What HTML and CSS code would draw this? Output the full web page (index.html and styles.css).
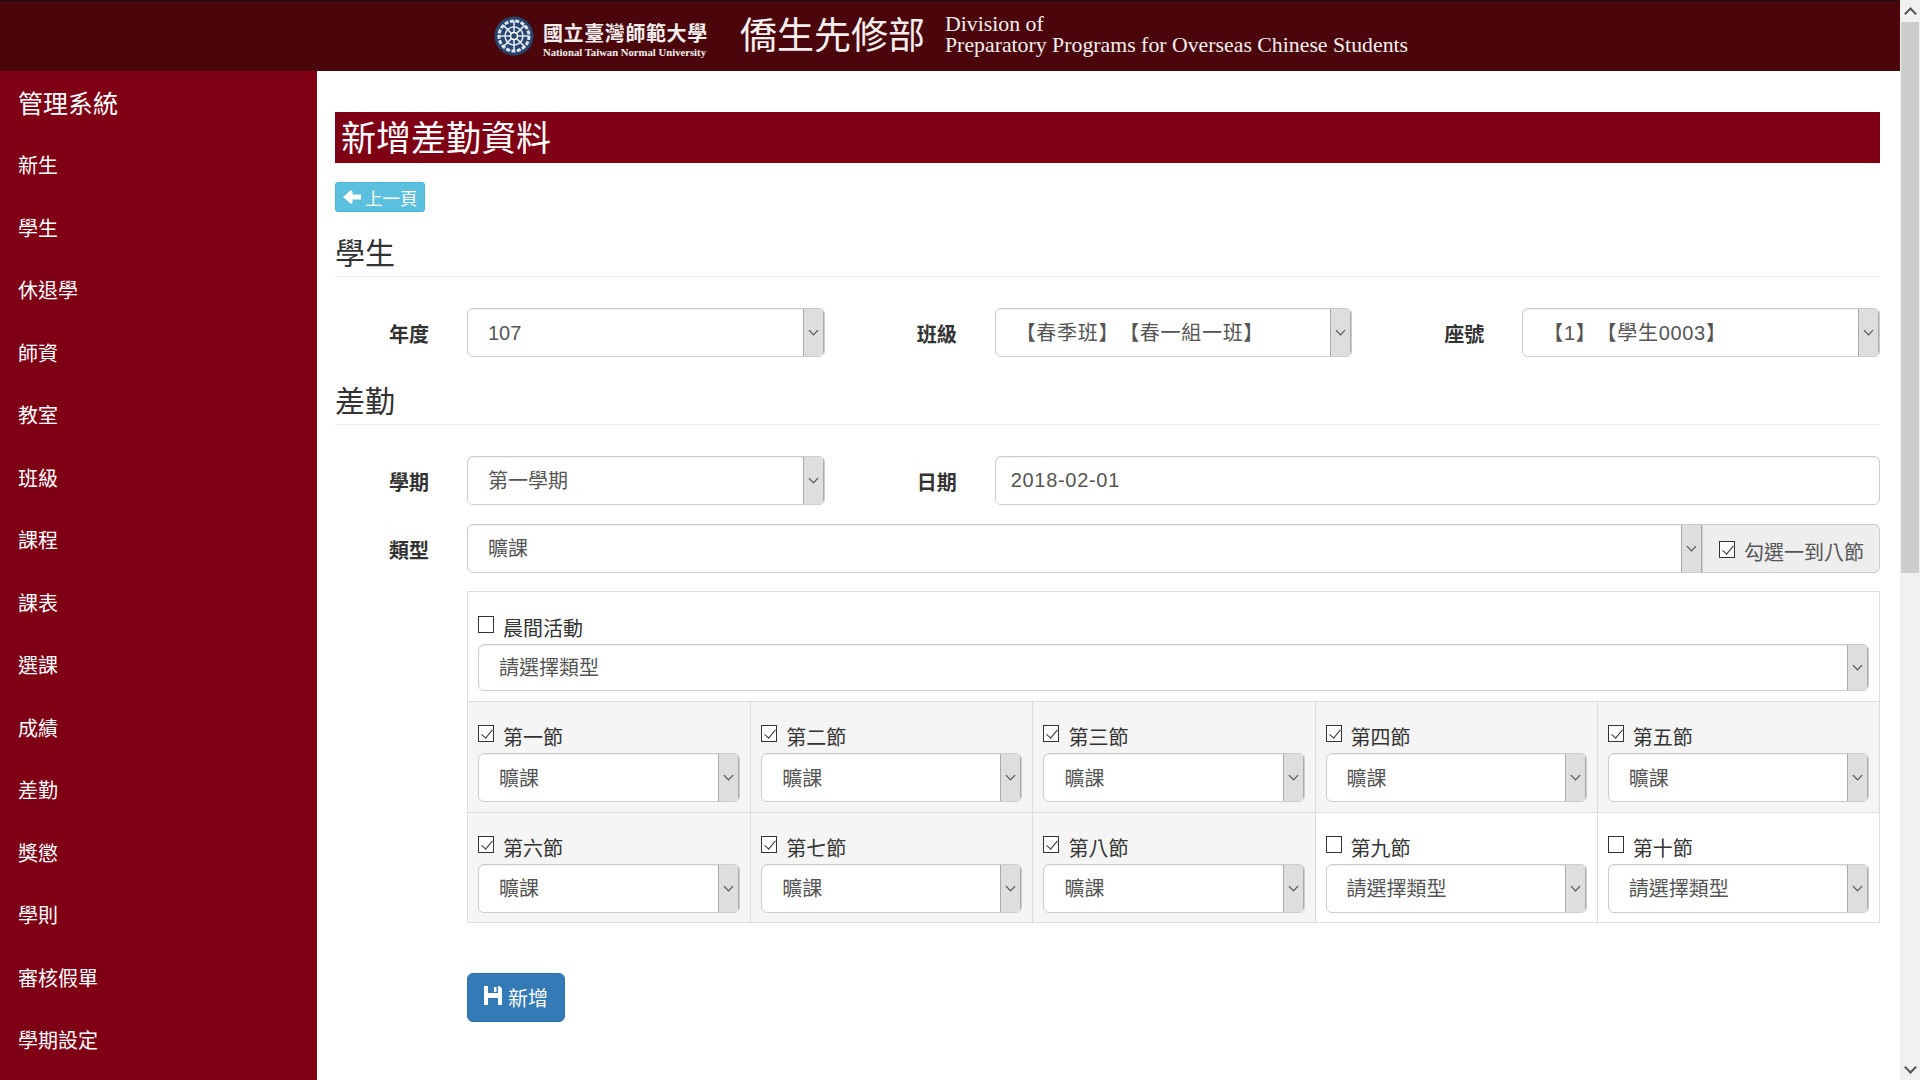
FILE: index.html
```html
<!DOCTYPE html>
<html lang="zh-Hant">
<head>
<meta charset="UTF-8">
<meta name="viewport" content="width=device-width,initial-scale=1.0">
<title>新增差勤資料</title>
<link rel="stylesheet" href="styles.css">
</head>
<body>
<div class="page">
    <div class="frame">
        <!-- 頁首 -->
        <header class="topbar">
            <svg class="logo" width="40" height="40" viewBox="0 0 40 40">
                <circle cx="20" cy="20" r="19.5" fill="#27456f"/>
                <circle cx="20" cy="20" r="15" fill="none" stroke="#dfe6ee" stroke-width="3" stroke-dasharray="4 1.5"/>
                <circle cx="20" cy="20" r="9" fill="none" stroke="#dfe6ee" stroke-width="1.5"/>
                <path d="M20 5V35M5 20H35M9.4 9.4L30.6 30.6M30.6 9.4L9.4 30.6" stroke="#dfe6ee" stroke-width="1.6"/>
                <circle cx="20" cy="20" r="3.5" fill="#27456f" stroke="#fff" stroke-width="1.5"/>
            </svg>
            <div class="school">
                <div class="school-zh">國立臺灣師範大學</div>
                <div class="school-en">National Taiwan Normal University</div>
            </div>
            <div class="dept-zh">僑生先修部</div>
            <div class="dept-en">Division of<br>Preparatory Programs for Overseas Chinese Students</div>
        </header>

        <div class="body-row">
            <!-- 左側選單 -->
            <nav class="sidebar">
                <div class="side-title">管理系統</div>
                <a href="#">新生</a>
                <a href="#">學生</a>
                <a href="#">休退學</a>
                <a href="#">師資</a>
                <a href="#">教室</a>
                <a href="#">班級</a>
                <a href="#">課程</a>
                <a href="#">課表</a>
                <a href="#">選課</a>
                <a href="#">成績</a>
                <a href="#">差勤</a>
                <a href="#">獎懲</a>
                <a href="#">學則</a>
                <a href="#">審核假單</a>
                <a href="#">學期設定</a>
            </nav>

            <main class="content">
                <h1 class="page-title">新增差勤資料</h1>
                <a class="btn-back" href="#">
                    <svg width="18" height="16" viewBox="0 0 18 16"><path d="M0 8L8 1L9.5 2.5V5.5H18V10.5H9.5V13.5L8 15Z" fill="#fff"/></svg>上一頁
                </a>

                <h3 class="section-head">學生</h3>
                <div class="row-3">
                    <div class="field">
                        <label>年度</label>
                        <div class="sel"><select><option>107</option></select><span class="arrow"></span></div>
                    </div>
                    <div class="field">
                        <label>班級</label>
                        <div class="sel wide-text"><select><option>【春季班】【春一組一班】</option></select><span class="arrow"></span></div>
                    </div>
                    <div class="field">
                        <label>座號</label>
                        <div class="sel wide-text"><select><option>【1】【學生0003】</option></select><span class="arrow"></span></div>
                    </div>
                </div>

                <h3 class="section-head second">差勤</h3>
                <div class="row-3">
                    <div class="field">
                        <label>學期</label>
                        <div class="sel"><select><option>第一學期</option></select><span class="arrow"></span></div>
                    </div>
                    <div class="field span-2">
                        <label>日期</label>
                        <input class="text-input" type="text" value="2018-02-01">
                    </div>
                </div>

                <div class="field type-row">
                    <label>類型</label>
                    <div class="type-group">
                        <div class="sel"><select><option>曠課</option></select><span class="arrow"></span></div>
                        <label class="addon"><input type="checkbox" checked>勾選一到八節</label>
                    </div>
                </div>

                <!-- 各節次 -->
                <div class="period-panel">
                    <div class="cell cell-wide">
                        <label class="check"><input type="checkbox">晨間活動</label>
                        <div class="sel low"><select><option>請選擇類型</option></select><span class="arrow"></span></div>
                    </div>
                    <div class="cell on">
                        <label class="check"><input type="checkbox" checked>第一節</label>
                        <div class="sel"><select><option>曠課</option></select><span class="arrow"></span></div>
                    </div>
                    <div class="cell on">
                        <label class="check"><input type="checkbox" checked>第二節</label>
                        <div class="sel"><select><option>曠課</option></select><span class="arrow"></span></div>
                    </div>
                    <div class="cell on">
                        <label class="check"><input type="checkbox" checked>第三節</label>
                        <div class="sel"><select><option>曠課</option></select><span class="arrow"></span></div>
                    </div>
                    <div class="cell on">
                        <label class="check"><input type="checkbox" checked>第四節</label>
                        <div class="sel"><select><option>曠課</option></select><span class="arrow"></span></div>
                    </div>
                    <div class="cell on">
                        <label class="check"><input type="checkbox" checked>第五節</label>
                        <div class="sel"><select><option>曠課</option></select><span class="arrow"></span></div>
                    </div>
                    <div class="cell on">
                        <label class="check"><input type="checkbox" checked>第六節</label>
                        <div class="sel"><select><option>曠課</option></select><span class="arrow"></span></div>
                    </div>
                    <div class="cell on">
                        <label class="check"><input type="checkbox" checked>第七節</label>
                        <div class="sel"><select><option>曠課</option></select><span class="arrow"></span></div>
                    </div>
                    <div class="cell on">
                        <label class="check"><input type="checkbox" checked>第八節</label>
                        <div class="sel"><select><option>曠課</option></select><span class="arrow"></span></div>
                    </div>
                    <div class="cell">
                        <label class="check"><input type="checkbox">第九節</label>
                        <div class="sel"><select><option>請選擇類型</option></select><span class="arrow"></span></div>
                    </div>
                    <div class="cell">
                        <label class="check"><input type="checkbox">第十節</label>
                        <div class="sel"><select><option>請選擇類型</option></select><span class="arrow"></span></div>
                    </div>
                </div>

                <button class="btn-save" type="button">
                    <svg width="20" height="19" viewBox="0 0 20 19"><path fill-rule="evenodd" d="M1 0H16.5L19 2.5V19H1ZM5 0V7H15V0ZM11 1H13.5V6H11ZM5 12V19H15V12Z" fill="#fff"/></svg>新增
                </button>
            </main>
        </div>
    </div>

    <!-- 捲軸 -->
    <div class="scrollbar">
        <span class="scroll-btn up"></span>
        <span class="scroll-thumb"></span>
        <span class="scroll-space"></span>
        <span class="scroll-btn down"></span>
    </div>
</div>
</body>
</html>
```

FILE: styles.css
```css
*{
    margin:0;
    padding:0;
    box-sizing:border-box;
}
html,body{
    height:100%;
    overflow:hidden;
}
body{
    font-family:"Liberation Sans","Noto Sans CJK TC",sans-serif;
    font-size:20px;
    color:#333;
    background:#fff;
    text-spacing-trim:space-all;
}
.page{
    display:flex;
    height:1080px;
}
.frame{
    flex:1;
    min-width:0;
    display:flex;
    flex-direction:column;
}

/* 頁首 */
.topbar{
    height:71px;
    flex:none;
    display:flex;
    align-items:center;
    padding-left:494px;
    background:#4a060b;
    border-top:1px solid #111;
    color:#f4eeee;
}
.logo{
    flex:none;
    margin-right:9px;
}
.school{
    width:178px;
    padding-top:7px;
}
.school-zh{
    font-size:20px;
    font-weight:700;
    line-height:24px;
    letter-spacing:.6px;
    white-space:nowrap;
}
.school-en{
    font-family:"Liberation Serif",serif;
    font-size:10.7px;
    font-weight:700;
    line-height:12px;
    white-space:nowrap;
}
.dept-zh{
    width:224px;
    padding:2px 0 0 19px;
    font-size:37px;
    line-height:44px;
    white-space:nowrap;
}
.dept-en{
    font-family:"Liberation Serif",serif;
    font-size:21.8px;
    line-height:21px;
    white-space:nowrap;
    padding-bottom:2px;
}

.body-row{
    flex:1;
    min-height:0;
    display:flex;
}

/* 左側選單 */
.sidebar{
    width:317px;
    flex:none;
    background:#7f0015;
    color:#fff;
}
.side-title{
    height:64px;
    padding:15px 0 0 18px;
    font-size:25px;
    line-height:36px;
}
.sidebar a{
    display:block;
    height:62.5px;
    padding-left:18px;
    font-size:20px;
    line-height:62px;
    color:#fff;
    text-decoration:none;
}

/* 內容 */
.content{
    flex:1;
    min-width:0;
    padding:41px 20px 0 18px;
}
.page-title{
    height:51px;
    padding:2px 0 0 6px;
    background:#7f0015;
    color:#fff;
    font-size:35px;
    font-weight:400;
    line-height:49px;
    margin-bottom:19px;
}
.btn-back{
    display:flex;
    align-items:center;
    gap:4px;
    width:90px;
    height:30px;
    padding-left:7px;
    background:#5bc0de;
    border:1px solid #46b8da;
    border-radius:3px;
    color:#fff;
    font-size:17.5px;
    text-decoration:none;
}
.section-head{
    margin-top:25px;
    margin-bottom:31px;
    padding-bottom:6px;
    border-bottom:1px solid #eee;
    font-size:30px;
    font-weight:400;
    line-height:33px;
}
.section-head.second{
    margin-top:28px;
}
.row-3{
    display:grid;
    grid-template-columns:repeat(3,1fr);
    column-gap:38px;
}
.field{
    display:grid;
    grid-template-columns:94px 1fr;
    column-gap:38px;
    align-items:center;
}
.field > label{
    text-align:right;
    font-weight:700;
    font-size:20px;
    padding-top:1px;
}
.span-2{
    grid-column:span 2;
}
.type-row{
    margin-top:19px;
}

/* 下拉選單 */
.sel{
    display:flex;
    height:49px;
    background:#fff;
    border:1px solid #ccc;
    border-radius:6px;
    overflow:hidden;
    box-shadow:inset 0 1px 1px rgba(0,0,0,.075);
}
.sel.low{
    height:47px;
}
.sel select{
    flex:1;
    min-width:0;
    appearance:none;
    -webkit-appearance:none;
    border:0;
    outline:0;
    background:transparent;
    padding-left:20px;
    font-family:inherit;
    font-size:20px;
    color:#555;
}
.sel.wide-text select{
    letter-spacing:.7px;
}
.arrow{
    flex:none;
    width:21px;
    display:flex;
    align-items:center;
    justify-content:center;
    background:#dedede;
    border:1px solid #aaa;
    border-width:0 1px 0 1px;
}
.arrow::after{
    content:"";
    width:6px;
    height:6px;
    margin-top:-4px;
    border:solid #444;
    border-width:0 1px 1px 0;
    transform:rotate(45deg);
}
.text-input{
    width:100%;
    height:49px;
    padding:0 15px;
    border:1px solid #ccc;
    border-radius:6px;
    outline:0;
    font-family:inherit;
    font-size:20px;
    letter-spacing:.7px;
    color:#555;
    box-shadow:inset 0 1px 1px rgba(0,0,0,.075);
}

/* 勾選框 */
input[type=checkbox]{
    appearance:none;
    -webkit-appearance:none;
    flex:none;
    display:inline-block;
    position:relative;
    width:16px;
    height:17px;
    background:#fff;
    border:1px solid #333;
}
input[type=checkbox]:checked::after{
    content:"";
    position:absolute;
    left:5px;
    top:1px;
    width:5px;
    height:10px;
    border:solid #333;
    border-width:0 1px 1px 0;
    transform:rotate(40deg);
}

.type-group{
    display:flex;
}
.type-group .sel{
    flex:1;
    border-radius:6px 0 0 6px;
}
.addon{
    width:177px;
    flex:none;
    display:flex;
    align-items:center;
    gap:9px;
    padding:5px 0 0 16px;
    background:#eee;
    border:1px solid #ccc;
    border-left:0;
    border-radius:0 6px 6px 0;
    color:#555;
    font-size:20px;
    white-space:nowrap;
}
.addon input{
    margin-top:-4px;
}

/* 節次表 */
.period-panel{
    margin:18px 0 0 132px;
    display:grid;
    grid-template-columns:repeat(5,1fr);
    border:1px solid #ddd;
}
.cell{
    padding:21px 10px 9.5px;
    border-top:1px solid #ddd;
    border-left:1px solid #ddd;
}
.cell:nth-child(5n+2){
    border-left:0;
}
.cell select{
    padding-top:2px;
}
.cell-wide{
    grid-column:1 / -1;
    border:0;
    padding-top:22px;
    padding-bottom:10px;
}
.cell-wide select{
    padding-top:0;
}
.cell.on{
    background:#f5f5f5;
}
.check{
    display:flex;
    align-items:flex-start;
    gap:9px;
    height:28px;
    margin-bottom:2px;
    font-size:20px;
    line-height:30px;
    color:#333;
}
.check input{
    margin-top:2px;
}

.btn-save{
    display:flex;
    align-items:center;
    gap:5px;
    width:98px;
    height:49px;
    margin:50px 0 0 132px;
    padding-left:15px;
    background:#337ab7;
    border:1px solid #2e6da4;
    border-radius:6px;
    color:#fff;
    font-family:inherit;
    font-size:20px;
}
.btn-save svg{
    margin-top:-4px;
}

/* 捲軸 */
.scrollbar{
    width:20px;
    flex:none;
    display:flex;
    flex-direction:column;
    background:#f1f1f1;
    padding-left:1px;
}
.scroll-btn{
    height:22px;
    flex:none;
    display:flex;
    align-items:center;
    justify-content:center;
}
.scroll-btn::after{
    content:"";
    width:7px;
    height:7px;
    border:solid #505050;
    border-width:2px 0 0 2px;
}
.scroll-btn.up::after{
    transform:translateY(2px) rotate(45deg);
}
.scroll-btn.down::after{
    transform:translateY(-2px) rotate(225deg);
}
.scroll-thumb{
    height:551px;
    flex:none;
    background:#cdcdcd;
    margin-right:1px;
}
.scroll-space{
    flex:1;
}
```
